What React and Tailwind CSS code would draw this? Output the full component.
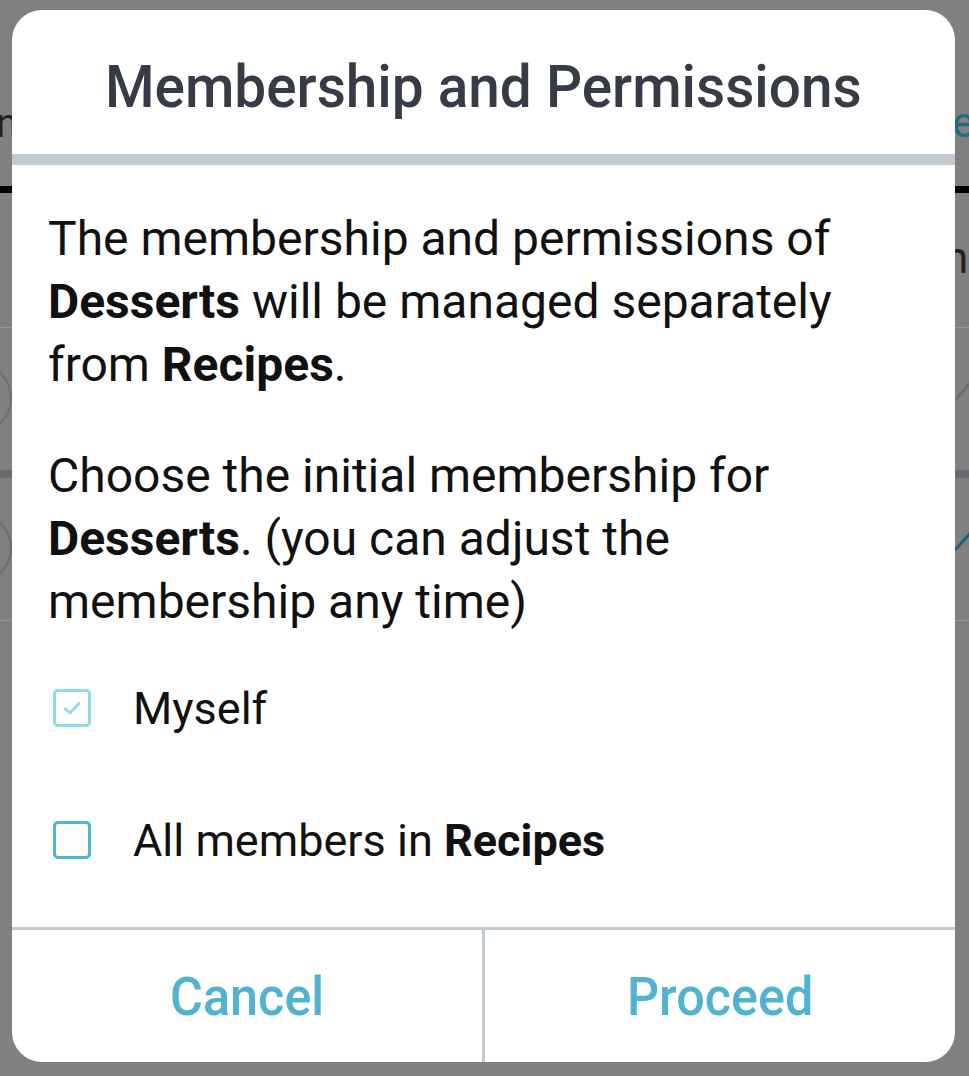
import React from "react";

function Checkbox({ checked }) {
  if (checked) {
    return (
      <div className="w-[38px] h-[38px] shrink-0 rounded-[5px] border-[3px] border-[#8fdbe8] flex items-center justify-center">
        <svg width="22" height="22" viewBox="0 0 22 22" fill="none">
          <path d="M4 11.5 L9 16 L18 6.5" stroke="#8fdbe8" strokeWidth="2.6" strokeLinecap="round" strokeLinejoin="round" />
        </svg>
      </div>
    );
  }
  return <div className="w-[38px] h-[38px] shrink-0 rounded-[5px] border-[3px] border-[#4fb6d2]" />;
}

export default function App() {
  return (
    <div
      className="relative w-[969px] h-[1076px] bg-[#808080] overflow-hidden"
      style={{ fontFamily: "Roboto, 'Liberation Sans', sans-serif" }}
    >
      {/* dimmed page behind the dialog */}
      <div className="absolute inset-0">
        <div className="absolute left-[-4px] top-[104px] text-[40px] leading-none text-[#222]">n</div>
        <div className="absolute left-[952px] top-[102px] text-[42px] leading-none text-[#1f6e7e]">er</div>
        <div className="absolute left-0 right-0 top-[186px] h-[7px] bg-black" />
        <div className="absolute left-[944px] top-[236px] text-[44px] leading-none text-[#222]">n</div>
        <div className="absolute left-0 right-0 top-[327px] h-px bg-[#959595]" />
        <div className="absolute left-[-60px] top-[362px] w-[72px] h-[72px] rounded-full border-2 border-[#6d6d6d]" />
        <div className="absolute left-0 right-0 top-[470px] h-[8px] bg-[#666a6e]" />
        <div className="absolute left-[-60px] top-[512px] w-[72px] h-[72px] rounded-full border-2 border-[#6d6d6d]" />
        <div className="absolute left-0 right-0 top-[620px] h-px bg-[#959595]" />
        <svg className="absolute left-[955px] top-[370px]" width="20" height="240" viewBox="0 0 20 240">
          <path d="M0 30 L20 8" stroke="#6f6f6f" strokeWidth="3" />
          <path d="M0 180 L20 158" stroke="#1e6474" strokeWidth="3" />
        </svg>
      </div>

      {/* dialog */}
      <div className="absolute left-[12px] top-[10px] w-[943px] h-[1052px] bg-white rounded-[30px] overflow-hidden flex flex-col">
        <div className="h-[144px] shrink-0 flex items-center justify-center">
          <span className="inline-block text-[60px] font-medium leading-none text-[#363b47] scale-x-[0.945] whitespace-nowrap pt-[10px]">
            Membership and Permissions
          </span>
        </div>
        <div className="h-[11px] shrink-0 bg-[#c1c9d1]" />

        <div className="flex-1 pl-[36px] pr-[60px] pt-[42px] text-[48px] leading-[63px] text-[#111111]">
          <p>
            The membership and permissions of <b className="font-bold">Desserts</b> will be managed separately from{" "}
            <b className="font-bold">Recipes</b>.
          </p>
          <p className="mt-[48px]">
            Choose the initial membership for <b className="font-bold">Desserts</b>. (you can adjust the membership any
            time)
          </p>
          <div className="mt-[44px] flex items-center h-[62px] pl-[5px] text-[45px]">
            <Checkbox checked />
            <span className="ml-[42px]">Myself</span>
          </div>
          <div className="mt-[70px] flex items-center h-[62px] pl-[5px] text-[45px]">
            <Checkbox />
            <span className="ml-[42px]">
              All members in <b className="font-bold">Recipes</b>
            </span>
          </div>
        </div>

        <div className="h-[135px] shrink-0 border-t-[3px] border-[#c2cad2] flex">
          <div className="flex-1 flex items-center justify-center border-r-[3px] border-[#c2cad2]">
            <span className="inline-block text-[53px] font-medium leading-none text-[#52b3d0] scale-x-[0.95] pt-[2px]">Cancel</span>
          </div>
          <div className="flex-1 flex items-center justify-center">
            <span className="inline-block text-[53px] font-medium leading-none text-[#52b3d0] scale-x-[0.95] pt-[2px]">Proceed</span>
          </div>
        </div>
      </div>
    </div>
  );
}
